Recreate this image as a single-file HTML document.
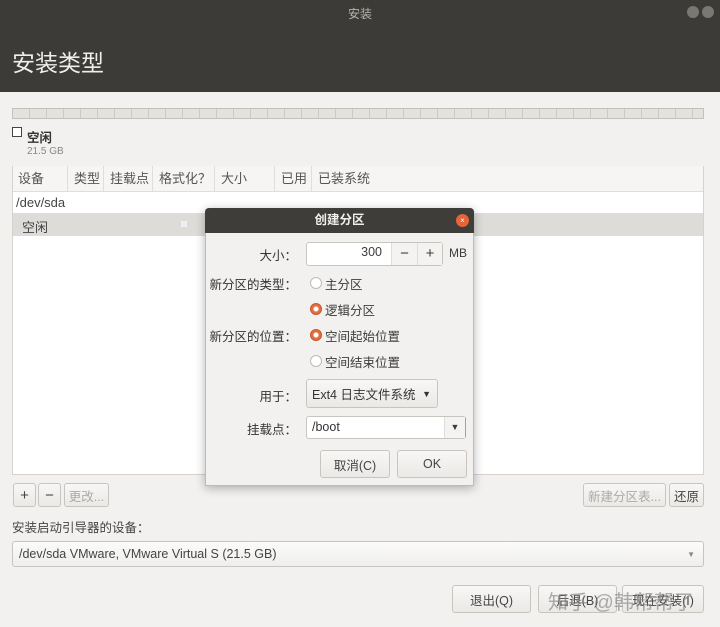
<!DOCTYPE html><html><head><meta charset="utf-8"><style>
*{box-sizing:border-box;margin:0;padding:0}
body{width:720px;height:627px;overflow:hidden;background:#f2f1f0;font-family:"Liberation Sans","Noto Sans CJK SC",sans-serif;font-size:13px;color:#3c3c3c;position:relative}
.a{position:absolute}
.btn{position:absolute;border:1px solid #c8c5c0;border-radius:3px;background:linear-gradient(#f8f7f6,#ebe9e6);display:flex;align-items:center;justify-content:center;font-size:12.5px;color:#444}
.dis{color:#aaa}
.th{position:absolute;top:166px;height:26px;line-height:26px;border-right:1px solid #e0deda;padding-left:6px;color:#555}
.radio{position:absolute;left:310px;width:12px;height:12px;border-radius:50%;border:1px solid #bbb;background:#fff}
.radio.on{border:1px solid #c7562f;background:radial-gradient(#fff 0 2px,#e2703f 3px)}
.lab{position:absolute;right:423px;text-align:right;font-size:12.5px;color:#333}
.rt{position:absolute;left:325px;font-size:12.5px}
</style></head><body>
<div class="a" style="left:0;top:0;width:720px;height:92px;background:#3c3b37"></div>
<div class="a" style="left:0;top:5px;width:720px;text-align:center;color:#b5b3ad;font-size:12px">安装</div>
<div class="a" style="left:687px;top:6px;width:12px;height:12px;border-radius:50%;background:#7a7873"></div>
<div class="a" style="left:702px;top:6px;width:12px;height:12px;border-radius:50%;background:#7a7873"></div>
<div class="a" style="left:12px;top:44px;color:#efeeea;font-size:23px">安装类型</div>
<div class="a" style="left:12px;top:108px;width:692px;height:11px;border:1px solid #c4c1bb;background:repeating-linear-gradient(90deg,#e4e2de 0 16px,#cdcac5 16px 17px)"></div>
<div class="a" style="left:12px;top:127px;width:10px;height:10px;border:1px solid #444;background:#fff"></div>
<div class="a" style="left:27px;top:127px;font-weight:bold;font-size:12.5px;color:#333">空闲</div>
<div class="a" style="left:27px;top:146px;font-size:10px;color:#888">21.5 GB</div>
<div class="a" style="left:12px;top:166px;width:692px;height:309px;border:1px solid #d6d3cf;background:#fff"></div>
<div class="a" style="left:13px;top:166px;width:690px;height:26px;background:#f6f5f4;border-bottom:1px solid #e0deda"></div>
<div class="th" style="left:12px;width:56px">设备</div>
<div class="th" style="left:68px;width:36px">类型</div>
<div class="th" style="left:104px;width:49px">挂载点</div>
<div class="th" style="left:153px;width:62px">格式化？</div>
<div class="th" style="left:215px;width:60px">大小</div>
<div class="th" style="left:275px;width:37px">已用</div>
<div class="th" style="left:312px;width:200px;border:none">已装系统</div>
<div class="a" style="left:16px;top:195px;color:#444">/dev/sda</div>
<div class="a" style="left:13px;top:213px;width:690px;height:23px;background:#dedcd8"></div>
<div class="a" style="left:22px;top:217px;color:#444">空闲</div>
<div class="a" style="left:180px;top:220px;width:8px;height:8px;background:#eee;border:1px solid #ddd"></div>
<div class="btn" style="left:13px;top:483px;width:23px;height:24px;font-size:15px">+</div>
<div class="btn" style="left:38px;top:483px;width:23px;height:24px;font-size:15px">−</div>
<div class="btn dis" style="left:64px;top:483px;width:45px;height:24px">更改...</div>
<div class="btn dis" style="left:583px;top:483px;width:83px;height:24px">新建分区表...</div>
<div class="btn" style="left:669px;top:483px;width:35px;height:24px">还原</div>
<div class="a" style="left:12px;top:517px;font-size:12.5px;color:#444">安装启动引导器的设备：</div>
<div class="btn" style="left:12px;top:541px;width:692px;height:26px;justify-content:flex-start;padding-left:6px;background:linear-gradient(#fbfbfa,#efeeec)">/dev/sda VMware, VMware Virtual S (21.5 GB)<span style="position:absolute;right:8px;font-size:8px;color:#888">▼</span></div>
<div class="btn" style="left:452px;top:585px;width:79px;height:28px">退出(Q)</div>
<div class="btn" style="left:538px;top:585px;width:79px;height:28px">后退(B)</div>
<div class="btn" style="left:622px;top:585px;width:82px;height:28px">现在安装(I)</div>
<div class="a" style="left:548px;top:586px;font-size:20px;color:rgba(120,120,120,.6)">知乎 @韩帮帮了</div>
<div class="a" style="left:205px;top:208px;width:269px;height:278px;background:#f2f1f0;border:1px solid #bbb;border-radius:4px 4px 0 0;box-shadow:0 2px 10px rgba(0,0,0,.3)"></div>
<div class="a" style="left:205px;top:208px;width:269px;height:25px;background:#3e3d39;border-radius:4px 4px 0 0;color:#f0efeb;font-weight:bold;font-size:12.5px;text-align:center;line-height:25px">创建分区</div>
<div class="a" style="left:456px;top:214px;width:13px;height:13px;border-radius:50%;background:#e5643a;color:#fff;font-size:8px;text-align:center;line-height:13px">×</div>
<div class="lab" style="top:245px">大小：</div>
<div class="a" style="left:306px;top:242px;width:137px;height:24px;border:1px solid #c8c5c0;border-radius:3px;background:#fff"></div>
<div class="a" style="left:340px;top:245px;width:42px;text-align:right;font-size:12.5px">300</div>
<div class="a" style="left:391px;top:243px;width:26px;height:22px;border-left:1px solid #ddd;background:#f4f3f2;text-align:center;line-height:22px;font-size:15px">−</div>
<div class="a" style="left:417px;top:243px;width:25px;height:22px;border-left:1px solid #ddd;background:#f4f3f2;text-align:center;line-height:22px;font-size:15px">+</div>
<div class="a" style="left:449px;top:246px;font-size:12px">MB</div>
<div class="lab" style="top:274px">新分区的类型：</div>
<div class="radio" style="top:277px"></div><div class="rt" style="top:274px">主分区</div>
<div class="radio on" style="top:303px"></div><div class="rt" style="top:300px">逻辑分区</div>
<div class="lab" style="top:326px">新分区的位置：</div>
<div class="radio on" style="top:329px"></div><div class="rt" style="top:326px">空间起始位置</div>
<div class="radio" style="top:355px"></div><div class="rt" style="top:352px">空间结束位置</div>
<div class="lab" style="top:386px">用于：</div>
<div class="btn" style="left:306px;top:379px;width:132px;height:29px;justify-content:flex-start;padding-left:5px;color:#333">Ext4 日志文件系统<span style="position:absolute;right:6px;font-size:9px">▼</span></div>
<div class="lab" style="top:419px">挂载点：</div>
<div class="a" style="left:306px;top:416px;width:160px;height:23px;border:1px solid #c8c5c0;border-right-color:#d7906f;border-radius:3px;background:#fff;padding-left:5px;line-height:21px;font-size:12.5px;color:#333">/boot</div>
<div class="a" style="left:444px;top:417px;width:21px;height:21px;border-left:1px solid #ddd;background:#f4f3f2;text-align:center;line-height:21px;font-size:9px">▼</div>
<div class="btn" style="left:320px;top:450px;width:70px;height:28px">取消(C)</div>
<div class="btn" style="left:397px;top:450px;width:70px;height:28px">OK</div>
</body></html>
